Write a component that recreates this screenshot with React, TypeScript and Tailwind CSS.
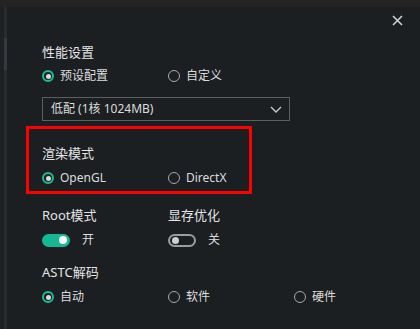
import React from 'react';

const FONT = { fontFamily: '"Noto Sans", "Noto Sans CJK SC", sans-serif' };

const Radio = ({ label, checked }: { label: string; checked?: boolean }) => (
  <div className="flex items-center h-[20px] gap-[6px]">
    {checked ? (
      <span className="w-[12px] h-[12px] rounded-full border-2 border-[#17bf97] flex items-center justify-center">
        <span className="w-[5px] h-[5px] rounded-full bg-[#dadada]" />
      </span>
    ) : (
      <span className="w-[12px] h-[12px] rounded-full border-[1.5px] border-[#a9a9a9]" />
    )}
    <span className="text-[12px] text-[#dcdcdc] leading-[20px]">{label}</span>
  </div>
);

const Toggle = ({ label, on }: { label: string; on?: boolean }) => (
  <div className="flex items-center h-[20px] gap-[12px]">
    {on ? (
      <span className="w-[28px] h-[13px] rounded-full bg-[#15b893] flex items-center justify-end pr-[3px]">
        <span className="w-[8px] h-[8px] rounded-full bg-white" />
      </span>
    ) : (
      <span className="w-[28px] h-[13px] rounded-full border-2 border-[#9c9c9c] flex items-center pl-[2px]">
        <span className="w-[7px] h-[7px] rounded-full bg-[#cfcfcf]" />
      </span>
    )}
    <span className="text-[12px] text-[#dcdcdc] leading-[20px]">{label}</span>
  </div>
);

const Heading = ({ children }: { children: React.ReactNode }) => (
  <div className="h-[20px] text-[13px] leading-[20px] text-[#e4e4e4]">{children}</div>
);

export default function App() {
  return (
    <div className="w-[420px] h-[329px] bg-[#1b1f22] overflow-hidden flex flex-col" style={FONT}>
      <div className="h-[7px] bg-[#242424]" />
      <div className="flex flex-1">
        {/* window edge + scrollbar */}
        <div className="w-[7px] flex bg-[#1e2123]">
          <div className="w-[4px]" />
          <div className="w-[3px] flex flex-col bg-[#272c2f]">
            <div className="h-[31px]" />
            <div className="h-[32px] bg-[#343a3e]" />
          </div>
        </div>

        <div className="relative flex-1 pl-[35px] pt-[35px]">
          <button className="absolute top-[8px] right-[17px] w-[11px] h-[11px]">
            <svg viewBox="0 0 11 11" width="11" height="11">
              <path d="M1 1 L10 10 M10 1 L1 10" stroke="#d4d4d4" strokeWidth="1.5" />
            </svg>
          </button>

          <Heading>性能设置</Heading>
          <div className="grid grid-cols-[126px_126px] mt-[4px]">
            <Radio label="预设配置" checked />
            <Radio label="自定义" />
          </div>

          <div className="mt-[11px] w-[248px] h-[24px] border border-[#5b5f62] flex items-center justify-between pl-[8px] pr-[7px]">
            <span className="text-[12px] text-[#dcdcdc]">低配 (1核 1024MB)</span>
            <svg viewBox="0 0 12 7" width="12" height="7">
              <path d="M1 1 L6 6 L11 1" stroke="#c8c8c8" strokeWidth="1.4" fill="none" />
            </svg>
          </div>

          <div className="relative mt-[22px]">
            <div className="absolute top-[-17px] left-[-16px] w-[226px] h-[68px] border-[3px] border-[#ff0000]" />
            <Heading>渲染模式</Heading>
            <div className="grid grid-cols-[126px_126px] mt-[5px]">
              <Radio label="OpenGL" checked />
              <Radio label="DirectX" />
            </div>
          </div>

          <div className="grid grid-cols-[126px_126px] mt-[17px]">
            <Heading>Root模式</Heading>
            <Heading>显存优化</Heading>
          </div>
          <div className="grid grid-cols-[126px_126px] mt-[5px]">
            <Toggle label="开" on />
            <Toggle label="关" />
          </div>

          <div className="mt-[12px]">
            <Heading>ASTC解码</Heading>
          </div>
          <div className="grid grid-cols-[126px_126px_126px] mt-[5px]">
            <Radio label="自动" checked />
            <Radio label="软件" />
            <Radio label="硬件" />
          </div>
        </div>
      </div>
    </div>
  );
}
